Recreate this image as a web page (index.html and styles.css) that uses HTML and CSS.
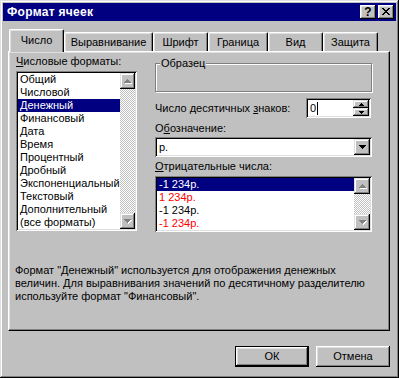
FILE: index.html
```html
<!DOCTYPE html>
<html lang="ru">
<head>
  <meta charset="UTF-8">
  <title>Формат ячеек</title>
  <link rel="stylesheet" href="styles.css">
</head>
<body>
  <div class="window">
    <div class="caption">
      <span class="caption-title">Формат ячеек</span>
      <div class="caption-buttons">
        <span class="cap-btn help">?</span>
        <span class="cap-btn close">
          <svg width="8" height="7" viewBox="0 0 8 7" shape-rendering="crispEdges"><path d="M0 0h2v1H0z M6 0h2v1H6z M1 1h2v1H1z M5 1h2v1H5z M2 2h4v1H2z M3 3h2v1H3z M2 4h4v1H2z M1 5h2v1H1z M5 5h2v1H5z M0 6h2v1H0z M6 6h2v1H6z" fill="#000"/></svg>
        </span>
      </div>
    </div>

    <div class="dialog-body">
      <div class="tabs">
        <div class="tab active" style="width:55px">Число</div>
        <div class="tab" style="width:89px">Выравнивание</div>
        <div class="tab" style="width:55px">Шрифт</div>
        <div class="tab" style="width:60px">Граница</div>
        <div class="tab" style="width:55px">Вид</div>
        <div class="tab" style="width:55px">Защита</div>
      </div>

      <div class="panel">
        <div class="left-col">
          <div class="label"><u>Ч</u>исловые форматы:</div>
          <div class="listbox formats">
            <ul class="items">
              <li>Общий</li>
              <li>Числовой</li>
              <li class="selected">Денежный</li>
              <li>Финансовый</li>
              <li>Дата</li>
              <li>Время</li>
              <li>Процентный</li>
              <li>Дробный</li>
              <li>Экспоненциальный</li>
              <li>Текстовый</li>
              <li>Дополнительный</li>
              <li>(все форматы)</li>
            </ul>
            <div class="scrollbar">
              <span class="scroll-btn">
                <svg width="8" height="5" viewBox="0 0 8 5" shape-rendering="crispEdges"><path d="M4 1h1v1h1v1h1v1h1v1H1V4h1V3h1V2h1z" fill="#fff"/><path d="M3 0h1v1h1v1h1v1h1v1H0V3h1V2h1V1h1z" fill="#808080"/></svg>
              </span>
              <span class="track"></span>
              <span class="scroll-btn">
                <svg width="8" height="5" viewBox="0 0 8 5" shape-rendering="crispEdges"><path d="M1 1h7v1H7v1H6v1H5v1H4V4H3V3H2V2H1z" fill="#fff"/><path d="M0 0h7v1H6v1H5v1H4v1H3V3H2V2H1V1H0z" fill="#808080"/></svg>
              </span>
            </div>
          </div>
        </div>

        <div class="right-col">
          <div class="group">
            <span class="legend">Образец</span>
          </div>

          <div class="decimals">
            <span>Число десятичных <u>з</u>наков:</span>
            <div class="spin">
              <span class="spin-value">0<span class="caret"></span></span>
              <div class="spin-buttons">
                <span class="spin-btn">
                  <svg width="5" height="3" viewBox="0 0 5 3" shape-rendering="crispEdges"><path d="M2 0h1v1h1v1h1v1H0V2h1V1h1z" fill="#000"/></svg>
                </span>
                <span class="spin-btn">
                  <svg width="5" height="3" viewBox="0 0 5 3" shape-rendering="crispEdges"><path d="M0 0h5v1H4v1H3v1H2V2H1V1H0z" fill="#000"/></svg>
                </span>
              </div>
            </div>
          </div>

          <div class="label symbol-label">О<u>б</u>означение:</div>
          <div class="combo">
            <span class="combo-value">р.</span>
            <span class="combo-btn">
              <svg width="7" height="4" viewBox="0 0 7 4" shape-rendering="crispEdges"><path d="M0 0h7v1H6v1H5v1H4v1H3V3H2V2H1V1H0z" fill="#000"/></svg>
            </span>
          </div>

          <div class="label negative-label"><u>О</u>трицательные числа:</div>
          <div class="listbox negatives">
            <ul class="items">
              <li class="selected">-1 234р.</li>
              <li class="red">1 234р.</li>
              <li>-1 234р.</li>
              <li class="red">-1 234р.</li>
            </ul>
            <div class="scrollbar">
              <span class="scroll-btn">
                <svg width="8" height="5" viewBox="0 0 8 5" shape-rendering="crispEdges"><path d="M4 1h1v1h1v1h1v1h1v1H1V4h1V3h1V2h1z" fill="#fff"/><path d="M3 0h1v1h1v1h1v1h1v1H0V3h1V2h1V1h1z" fill="#808080"/></svg>
              </span>
              <span class="track"></span>
              <span class="scroll-btn">
                <svg width="8" height="5" viewBox="0 0 8 5" shape-rendering="crispEdges"><path d="M1 1h7v1H7v1H6v1H5v1H4V4H3V3H2V2H1z" fill="#fff"/><path d="M0 0h7v1H6v1H5v1H4V4H3V3H2V2H1V1H0z" fill="#808080"/></svg>
              </span>
            </div>
          </div>
        </div>

        <p class="description">Формат "Денежный" используется для отображения денежных<br>величин. Для выравнивания значений по десятичному разделителю<br>используйте формат "Финансовый".</p>
      </div>

      <div class="buttons">
        <button class="btn default">ОК</button>
        <button class="btn">Отмена</button>
      </div>
    </div>
  </div>
</body>
</html>
```

FILE: styles.css
```css
* {
  box-sizing: border-box;
}
body {
  margin: 0;
  font-family: "Liberation Sans", Arial, sans-serif;
  font-size: 11px;
  line-height: 13px;
  color: #000;
  background-color: #c0c0c0;
}
u {
  text-decoration: underline;
  text-underline-offset: 1px;
}
.window {
  width: 399px;
  height: 378px;
  padding: 3px;
  background-color: #c0c0c0;
  box-shadow: inset -1px -1px #000, inset 1px 1px #dfdfdf, inset -2px -2px #808080, inset 2px 2px #fff;
  display: flex;
  flex-direction: column;
}
.caption {
  height: 18px;
  background-color: #000080;
  color: #fff;
  font-weight: bold;
  display: flex;
  align-items: center;
  justify-content: space-between;
  padding: 0 2px 0 4px;
}
.caption-title {
  font-size: 12px;
  letter-spacing: 0.3px;
}
.caption-buttons {
  display: flex;
  gap: 2px;
}
.cap-btn {
  width: 16px;
  height: 14px;
  background-color: #c0c0c0;
  color: #000;
  box-shadow: inset -1px -1px #000, inset 1px 1px #fff, inset -2px -2px #808080, inset 2px 2px #dfdfdf;
  display: flex;
  align-items: center;
  justify-content: center;
  font-size: 12px;
  line-height: 12px;
  padding-bottom: 1px;
}
.cap-btn.close {
  padding: 0 1px 1px 0;
}
.dialog-body {
  flex: 1;
  padding: 8px 6px 0 5px;
  display: flex;
  flex-direction: column;
}
.tabs {
  display: flex;
  align-items: flex-end;
  height: 22px;
  padding-left: 1px;
  position: relative;
  z-index: 1;
}
.tab {
  height: 19px;
  padding-top: 3px;
  text-align: center;
  white-space: nowrap;
  background-color: #c0c0c0;
  border-top: 1px solid #fff;
  border-left: 1px solid #fff;
  border-right: 1px solid #000;
  border-radius: 2px 2px 0 0;
  box-shadow: inset -1px 0 #808080, inset 1px 1px #dfdfdf;
}
.tab.active {
  height: 23px;
  margin-bottom: -1px;
  padding-top: 4px;
}
.panel {
  height: 280px;
  border: 1px solid;
  border-color: #fff #000 #000 #fff;
  box-shadow: inset -1px -1px #808080, inset 1px 1px #dfdfdf;
  display: grid;
  grid-template-columns: 121px 217px;
  column-gap: 18px;
  align-content: start;
  padding: 3px 17px 0 7px;
}
.listbox {
  display: flex;
  background-color: #fff;
  padding: 2px;
  box-shadow: inset 1px 1px #808080, inset -1px -1px #fff, inset 2px 2px #000, inset -2px -2px #dfdfdf;
}
.formats {
  height: 160px;
  margin-top: 3px;
}
.items {
  flex: 1;
  list-style: none;
  margin: 0;
  padding: 0;
}
.items li {
  height: 13px;
  padding-left: 2px;
  white-space: nowrap;
}
.items li.selected {
  background-color: #000080;
  color: #fff;
}
.items li.red {
  color: #f00;
}
.scrollbar {
  width: 16px;
  display: flex;
  flex-direction: column;
}
.scroll-btn {
  height: 16px;
  flex-shrink: 0;
  background-color: #c0c0c0;
  box-shadow: inset -1px -1px #000, inset 1px 1px #dfdfdf, inset -2px -2px #808080, inset 2px 2px #fff;
  display: flex;
  align-items: center;
  justify-content: center;
  padding-left: 1px;
}
.track {
  flex: 1;
  background: repeating-conic-gradient(#c0c0c0 0 25%, #fff 0 50%) 0 0 / 2px 2px;
}
.group {
  position: relative;
  height: 29px;
  margin-top: 8px;
  border: 1px solid #808080;
  box-shadow: inset 1px 1px #fff, 1px 1px #fff;
}
.group .legend {
  position: absolute;
  top: -7px;
  left: 4px;
  padding: 0 1px;
  background-color: #c0c0c0;
}
.decimals {
  display: flex;
  align-items: center;
  justify-content: space-between;
  margin-top: 6px;
}
.spin {
  width: 65px;
  height: 20px;
  margin-right: 1px;
  display: flex;
  padding: 2px;
  background-color: #fff;
  box-shadow: inset 1px 1px #808080, inset -1px -1px #fff, inset 2px 2px #000, inset -2px -2px #dfdfdf;
}
.spin-value {
  flex: 1;
  display: flex;
  align-items: center;
  padding-left: 2px;
}
.caret {
  display: inline-block;
  width: 1px;
  height: 13px;
  margin-left: 1px;
  background-color: #000;
}
.spin-buttons {
  width: 16px;
  display: flex;
  flex-direction: column;
}
.spin-btn {
  height: 8px;
  background-color: #c0c0c0;
  box-shadow: inset -1px -1px #000, inset 1px 1px #dfdfdf, inset -2px -2px #808080, inset 2px 2px #fff;
  display: flex;
  align-items: center;
  justify-content: center;
}
.symbol-label {
  margin-top: 4px;
}
.combo {
  height: 20px;
  margin-top: 2px;
  display: flex;
  padding: 2px;
  background-color: #fff;
  box-shadow: inset 1px 1px #808080, inset -1px -1px #fff, inset 2px 2px #000, inset -2px -2px #dfdfdf;
}
.combo-value {
  flex: 1;
  padding-left: 2px;
  display: flex;
  align-items: center;
}
.combo-btn {
  width: 16px;
  background-color: #c0c0c0;
  box-shadow: inset -1px -1px #000, inset 1px 1px #dfdfdf, inset -2px -2px #808080, inset 2px 2px #fff;
  display: flex;
  align-items: center;
  justify-content: center;
}
.negative-label {
  margin-top: 3px;
}
.negatives {
  height: 56px;
  margin-top: 3px;
}
.description {
  grid-column: 1 / -1;
  margin: 32px 0 0 -1px;
  white-space: nowrap;
}
.buttons {
  display: flex;
  justify-content: flex-end;
  gap: 7px;
  margin-top: 15px;
}
.btn {
  width: 74px;
  height: 21px;
  padding: 0;
  font: inherit;
  color: #000;
  background-color: #c0c0c0;
  border: none;
  box-shadow: inset -1px -1px #000, inset 1px 1px #fff, inset -2px -2px #808080, inset 2px 2px #dfdfdf;
}
.btn.default {
  border: 1px solid #000;
  box-shadow: inset -1px -1px #000, inset 1px 1px #fff, inset -2px -2px #808080, inset 2px 2px #dfdfdf;
}
```
